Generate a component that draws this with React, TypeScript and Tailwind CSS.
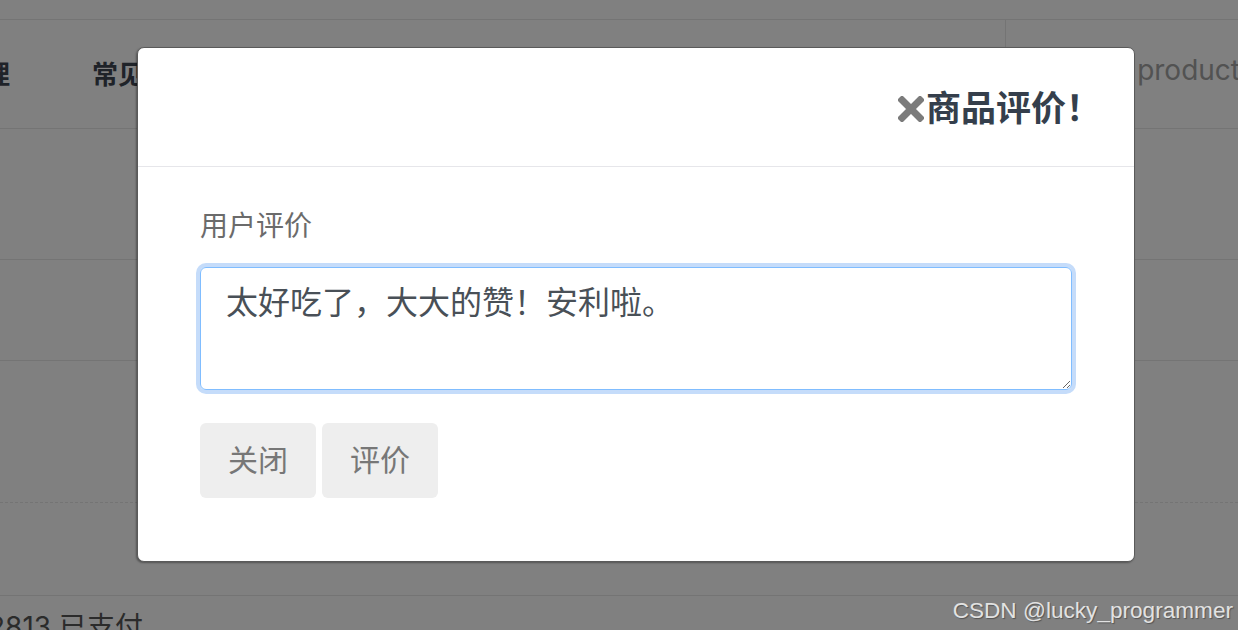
import React from "react";

const font = { fontFamily: 'Inter, "Noto Sans CJK SC", sans-serif' };

function CloseMark() {
  return (
    <svg width="26" height="26" viewBox="0 0 26 26" aria-hidden="true" className="mr-[2px] mt-[1px]">
      <path d="M4 4 L22 22 M22 4 L4 22" stroke="#7b7b7b" strokeWidth="7" strokeLinecap="square" />
    </svg>
  );
}

export default function App() {
  return (
    <div
      className="relative w-[1238px] h-[630px] overflow-hidden bg-[#808080]"
      style={font}
    >
      {/* page behind the backdrop */}
      <div className="flex flex-col">
        <div className="h-[20px] border-b border-[#747474]" />
        <div className="h-[109px] border-b border-[#747474] flex items-center">
          <span className="-ml-[42px] w-[134px] shrink-0 text-[26px] font-bold text-[#1f2329]">管理</span>
          <span className="text-[26px] font-bold text-[#1f2329]">常见问题</span>
          <div className="ml-auto flex items-center h-full">
            <div className="h-full w-[1px] bg-[#747474] mr-[131px]" />
            <span className="text-[28px] text-[#525252] pb-[8px] -mr-[2px]">product</span>
          </div>
        </div>
        <div className="h-[131px] border-b border-[#747474]" />
        <div className="h-[101px] border-b border-[#747474]" />
        <div className="h-[142px] border-b border-dashed border-[#747474]" />
        <div className="h-[93px] border-b border-[#747474]" />
        <div className="flex items-center pt-[11px]">
          <span className="-ml-[12px] text-[28px] leading-[40px] text-[#2b2b2b]">2813 已支付</span>
        </div>
      </div>

      {/* modal */}
      <div className="absolute left-[137px] top-[47px] w-[998px] h-[515px] bg-white border border-[#5a5a5a] rounded-[7px] shadow-[-1px_1px_2px_rgba(0,0,0,0.35)] flex flex-col">
        <div className="h-[119px] border-b border-[#e6e6ea] flex items-center justify-end pr-[33px] pt-[2px]">
          <CloseMark />
          <span className="text-[35px] font-bold text-[#353f4c]">商品评价！</span>
        </div>
        <div className="flex flex-col pl-[62px] pr-[62px] pt-[39px]">
          <label className="text-[28px] leading-[40px] text-[#6b6b6b]">用户评价</label>
          <textarea
            defaultValue="太好吃了，大大的赞！安利啦。"
            className="mt-[21px] w-[872px] h-[123px] border border-[#80bdff] rounded-[6px] shadow-[0_0_0_4px_#c5dcfa] outline-none pl-[25px] pt-[11px] text-[32px] leading-[48px] text-[#495057]"
            style={font}
          />
          <div className="flex gap-[6px] mt-[33px]">
            <button className="w-[116px] h-[75px] rounded-[6px] bg-[#eeeeee] text-[30px] text-[#777777]">关闭</button>
            <button className="w-[116px] h-[75px] rounded-[6px] bg-[#eeeeee] text-[30px] text-[#777777]">评价</button>
          </div>
        </div>
      </div>

      {/* watermark */}
      <div className="absolute right-[5px] top-[594px] text-[22.6px] text-[#e2e2e2] [text-shadow:1px_1px_1px_rgba(0,0,0,0.35)]" style={{ fontFamily: '"Liberation Sans", Arial, sans-serif' }}>
        CSDN @lucky_programmer
      </div>
    </div>
  );
}
